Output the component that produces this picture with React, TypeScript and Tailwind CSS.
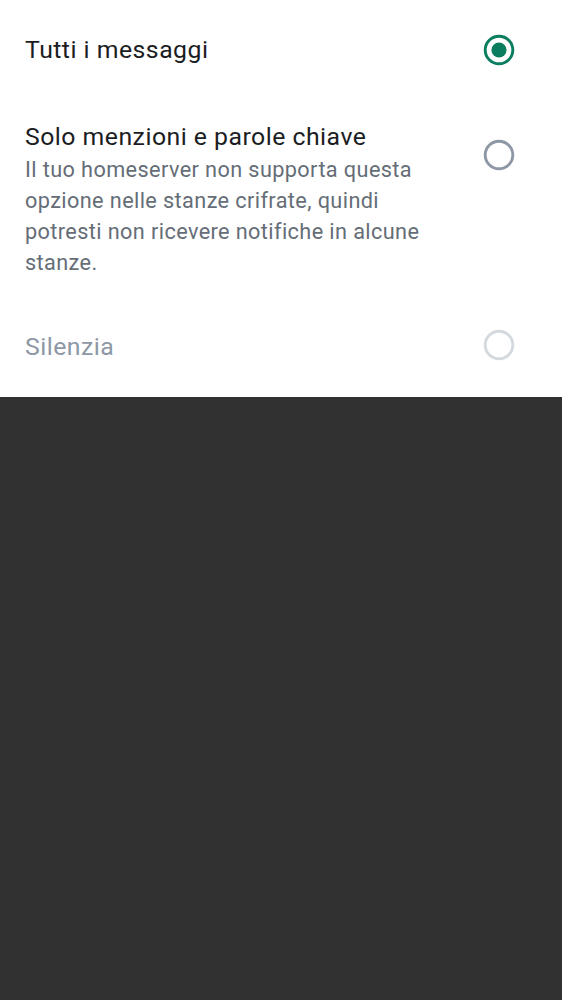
import type { ReactNode } from 'react'

type RadioState = 'checked' | 'unchecked' | 'disabled'

function Radio({ state }: { state: RadioState }) {
  const ring =
    state === 'checked' ? '#0a7d5f' : state === 'unchecked' ? '#8d97a5' : '#d4d9df'
  return (
    <svg width="34" height="34" viewBox="0 0 34 34" className="block">
      <circle cx="17" cy="17" r="13.8" fill="none" stroke={ring} strokeWidth="2.9" />
      {state === 'checked' && <circle cx="17" cy="17" r="7.6" fill={ring} />}
    </svg>
  )
}

function Option({
  title,
  description,
  state,
  radioClass,
  titleClass,
}: {
  title: string
  description?: ReactNode
  state: RadioState
  radioClass: string
  titleClass: string
}) {
  return (
    <div className="flex items-start justify-between pl-[25px] pr-[46px] py-[25px]">
      <div className="flex-1 pr-[56px]">
        <div className={`text-[24.8px] leading-[37px] tracking-[0.48px] ${titleClass}`}>{title}</div>
        {description && (
          <div className="-mt-[1px] text-[21.7px] leading-[31px] tracking-[0.39px] text-[#656d77]">
            {description}
          </div>
        )}
      </div>
      <div className={radioClass}>
        <Radio state={state} />
      </div>
    </div>
  )
}

export default function App() {
  return (
    <div className="min-h-[1000px] bg-[#313131]" style={{ fontFamily: 'Roboto, "Noto Sans", sans-serif' }}>
      <div className="bg-white pt-[6px] pb-[7px]">
        <Option
          title="Tutti i messaggi"
          state="checked"
          radioClass="mt-[2px]"
          titleClass="text-[#1b1d22]"
        />
        <Option
          title="Solo menzioni e parole chiave"
          description="Il tuo homeserver non supporta questa opzione nelle stanze crifrate, quindi potresti non ricevere notifiche in alcune stanze."
          state="unchecked"
          radioClass="mt-[20px]"
          titleClass="text-[#1b1d22]"
        />
        <Option
          title="Silenzia"
          state="disabled"
          radioClass="mt-[0px]"
          titleClass="text-[#8d97a5]"
        />
      </div>
    </div>
  )
}
